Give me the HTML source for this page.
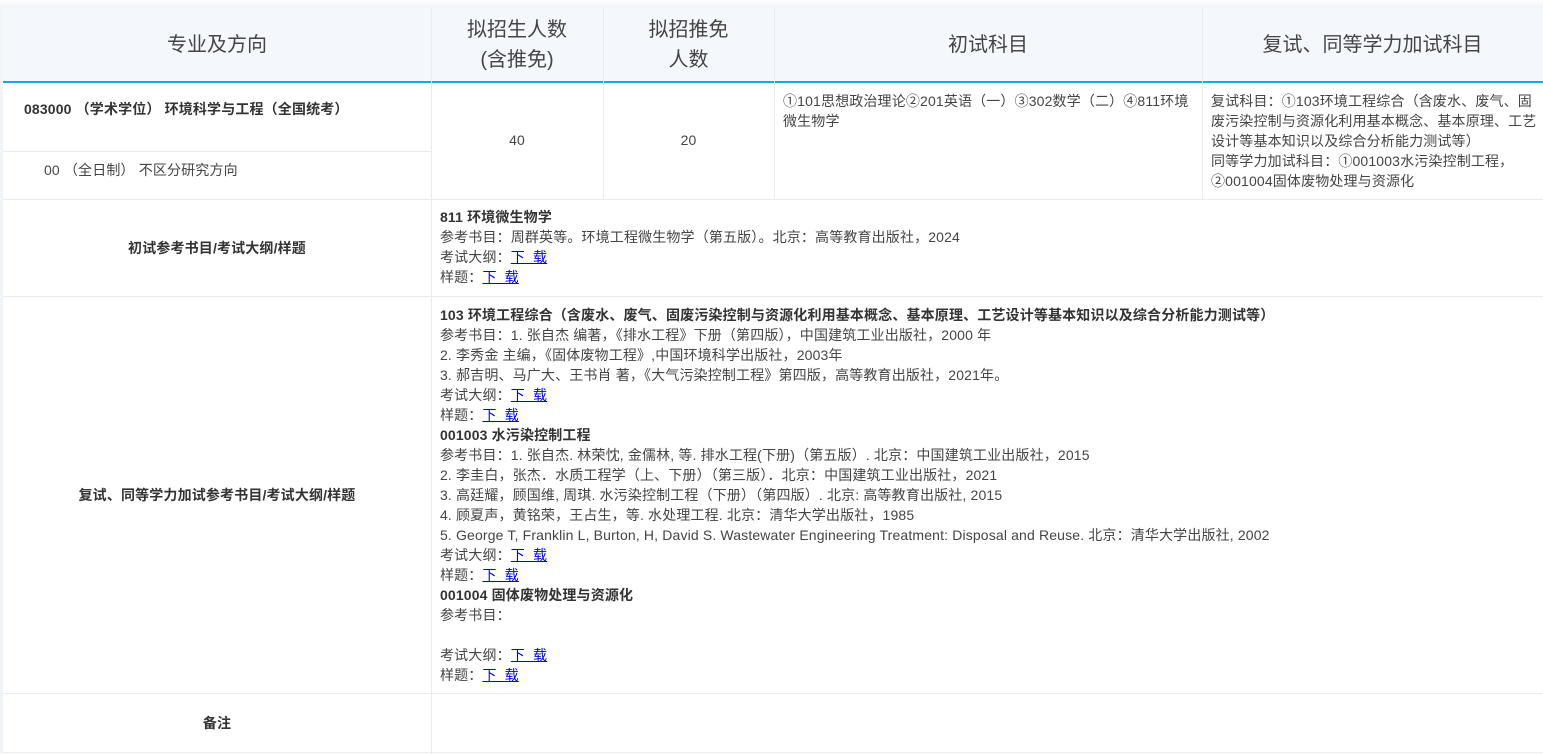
<!DOCTYPE html>
<html><head><meta charset="utf-8"><style>
body{margin:0;width:1543px;height:754px;background:#fff;font-family:"Liberation Sans","Noto Sans CJK SC",sans-serif;color:#333;overflow:hidden;position:relative}
.a{position:absolute;box-sizing:border-box}
.hl{position:absolute;height:1px;background:#e8ecef}
.vl{position:absolute;width:1px;background:#e8ecef}
.h{font-size:20px;color:#444;text-align:center;line-height:30px;display:flex;align-items:center;justify-content:center}
.t{font-size:14px;letter-spacing:0.15px;line-height:20px;color:#444;white-space:nowrap}
.w{white-space:normal}
b{color:#333}
a{color:#00e;text-decoration:underline}
</style></head><body>
<div class="a" style="left:0;top:0;width:1543px;height:8px;background:linear-gradient(#fff,#f1f4f6)"></div>
<div class="a" style="left:0;top:8px;width:3px;height:746px;background:#f1f4f6"></div>
<div class="a" style="left:3px;top:8px;width:1540px;height:73px;background:#f4f8fd"></div>
<div class="a" style="left:3px;top:81px;width:1540px;height:2px;background:#16a8e6"></div>
<div class="a h" style="left:3px;top:8px;width:428px;height:73px">专业及方向</div>
<div class="a h" style="left:431px;top:8px;width:172px;height:73px">拟招生人数<br>(含推免)</div>
<div class="a h" style="left:603px;top:8px;width:171px;height:73px">拟招推免<br>人数</div>
<div class="a h" style="left:774px;top:8px;width:428px;height:73px">初试科目</div>
<div class="a h" style="left:1202px;top:8px;width:341px;height:73px">复试、同等学力加试科目</div>
<div class="vl" style="left:431px;top:8px;height:746px"></div>
<div class="vl" style="left:603px;top:8px;height:191px"></div>
<div class="vl" style="left:774px;top:8px;height:191px"></div>
<div class="vl" style="left:1202px;top:8px;height:191px"></div>
<div class="hl" style="left:3px;top:151px;width:428px"></div>
<div class="hl" style="left:3px;top:199px;width:1540px"></div>
<div class="hl" style="left:3px;top:296px;width:1540px"></div>
<div class="hl" style="left:3px;top:693px;width:1540px"></div>
<div class="hl" style="left:3px;top:752px;width:1540px"></div>
<div class="a t" style="left:24px;top:99px"><b>083000 （学术学位） 环境科学与工程（全国统考）</b></div>
<div class="a t" style="left:44px;top:160px">00 （全日制） 不区分研究方向</div>
<div class="a t" style="left:431px;top:130px;width:172px;text-align:center">40</div>
<div class="a t" style="left:603px;top:130px;width:171px;text-align:center">20</div>
<div class="a t w" style="left:783px;top:91px;width:412px">①101思想政治理论②201英语（一）③302数学（二）④811环境微生物学</div>
<div class="a t w" style="left:1211px;top:91px;width:328px">复试科目：①103环境工程综合（含废水、废气、固废污染控制与资源化利用基本概念、基本原理、工艺设计等基本知识以及综合分析能力测试等）<br>同等学力加试科目：①001003水污染控制工程，<br>②001004固体废物处理与资源化</div>
<div class="a t" style="left:3px;top:238px;width:428px;text-align:center"><b>初试参考书目/考试大纲/样题</b></div>
<div class="a t" style="left:440px;top:207px;width:1100px"><b>811 环境微生物学</b><br>参考书目：周群英等。环境工程微生物学（第五版）。北京：高等教育出版社，2024<br>考试大纲：<a>下&nbsp; 载</a><br>样题：<a>下&nbsp; 载</a></div>
<div class="a t" style="left:3px;top:485px;width:428px;text-align:center"><b>复试、同等学力加试参考书目/考试大纲/样题</b></div>
<div class="a t" style="left:440px;top:305px;width:1100px"><b>103 环境工程综合（含废水、废气、固废污染控制与资源化利用基本概念、基本原理、工艺设计等基本知识以及综合分析能力测试等）</b><br>参考书目：1. 张自杰 编著，《排水工程》下册（第四版），中国建筑工业出版社，2000 年<br>2. 李秀金 主编，《固体废物工程》,中国环境科学出版社，2003年<br>3. 郝吉明、马广大、王书肖 著，《大气污染控制工程》第四版，高等教育出版社，2021年。<br>考试大纲：<a>下&nbsp; 载</a><br>样题：<a>下&nbsp; 载</a><br><b>001003 水污染控制工程</b><br>参考书目：1. 张自杰. 林荣忱, 金儒林, 等. 排水工程(下册)（第五版）. 北京：中国建筑工业出版社，2015<br>2. 李圭白，张杰．水质工程学（上、下册）（第三版）．北京：中国建筑工业出版社，2021<br>3. 高廷耀，顾国维, 周琪. 水污染控制工程（下册）（第四版）. 北京: 高等教育出版社, 2015<br>4. 顾夏声，黄铭荣，王占生，等. 水处理工程. 北京：清华大学出版社，1985<br>5. George T, Franklin L, Burton, H, David S. Wastewater Engineering Treatment: Disposal and Reuse. 北京：清华大学出版社, 2002<br>考试大纲：<a>下&nbsp; 载</a><br>样题：<a>下&nbsp; 载</a><br><b>001004 固体废物处理与资源化</b><br>参考书目：<br><br>考试大纲：<a>下&nbsp; 载</a><br>样题：<a>下&nbsp; 载</a></div>
<div class="a t" style="left:3px;top:713px;width:428px;text-align:center"><b>备注</b></div>
</body></html>
